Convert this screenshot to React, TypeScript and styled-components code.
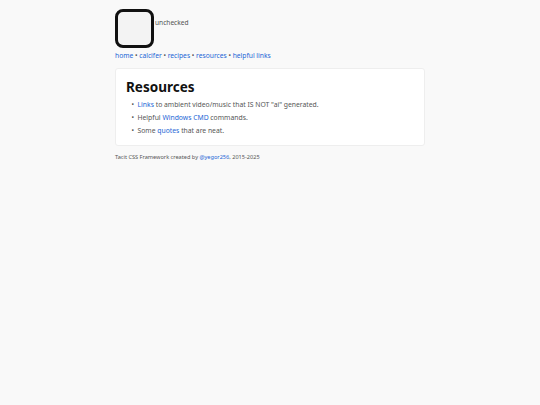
import * as React from 'react'
import styled, { createGlobalStyle } from 'styled-components'

const Global = createGlobalStyle`
  html, body {
    margin: 0;
    padding: 0;
    background: #f9f9f9;
    font-family: "Noto Sans", "Open Sans", sans-serif;
    color: #555;
  }
  a {
    color: #1c66d6;
    text-decoration: none;
  }
`

const Page = styled.div`
  width: 310px;
  margin: 0 auto;
  padding-top: 9px;
`

const Head = styled.header`
  display: flex;
  flex-direction: column;
  gap: 3px;
`

const CheckRow = styled.label`
  display: flex;
  align-items: flex-start;
  font-size: 6.6px;
  line-height: 9px;
  color: #555;
`

const Box = styled.span`
  box-sizing: border-box;
  width: 39px;
  height: 39px;
  border: 3px solid #111;
  border-radius: 8px;
  background: #f3f3f3;
`

const CheckLabel = styled.span`
  margin-top: 8.5px;
  margin-left: 1px;
`

const Nav = styled.nav`
  font-size: 6.7px;
  line-height: 10px;
  color: #555;
`

const Card = styled.section`
  margin-top: 6.5px;
  background: #fff;
  border: 1px solid #eeeeee;
  border-radius: 3px;
  padding: 9.5px 10px 8px;
`

const Title = styled.h2`
  margin: 0 0 1.5px;
  font-size: 13.5px;
  font-weight: 700;
  color: #111;
  line-height: 18px;
`

const List = styled.ul`
  margin: 0;
  padding-left: 13px;
  list-style: none;
  font-size: 6.8px;
  line-height: 13px;
`

const Item = styled.li`
  &::before {
    content: "•";
    display: inline-block;
    width: 6px;
    margin-left: -7.5px;
    color: #555;
  }
`

const Footer = styled.footer`
  margin-top: 7px;
  font-size: 5.6px;
  line-height: 8px;
  color: #555;
`

export default function App() {
  return <>
    <Global />
    <Page>
      <Head>
        <CheckRow>
          <Box />
          <CheckLabel>unchecked</CheckLabel>
        </CheckRow>
        <Nav>
          <a href="#">home</a> • <a href="#">calcifer</a> • <a href="#">recipes</a> • <a href="#">resources</a> • <a href="#">helpful links</a>
        </Nav>
      </Head>
      <Card>
        <Title>Resources</Title>
        <List>
          <Item><a href="#">Links</a> to ambient video/music that IS NOT "ai" generated.</Item>
          <Item>Helpful <a href="#">Windows CMD</a> commands.</Item>
          <Item>Some <a href="#">quotes</a> that are neat.</Item>
        </List>
      </Card>
      <Footer>
        Tacit CSS Framework created by <a href="#">@yegor256</a>, 2015-2025
      </Footer>
    </Page>
  </>
}
